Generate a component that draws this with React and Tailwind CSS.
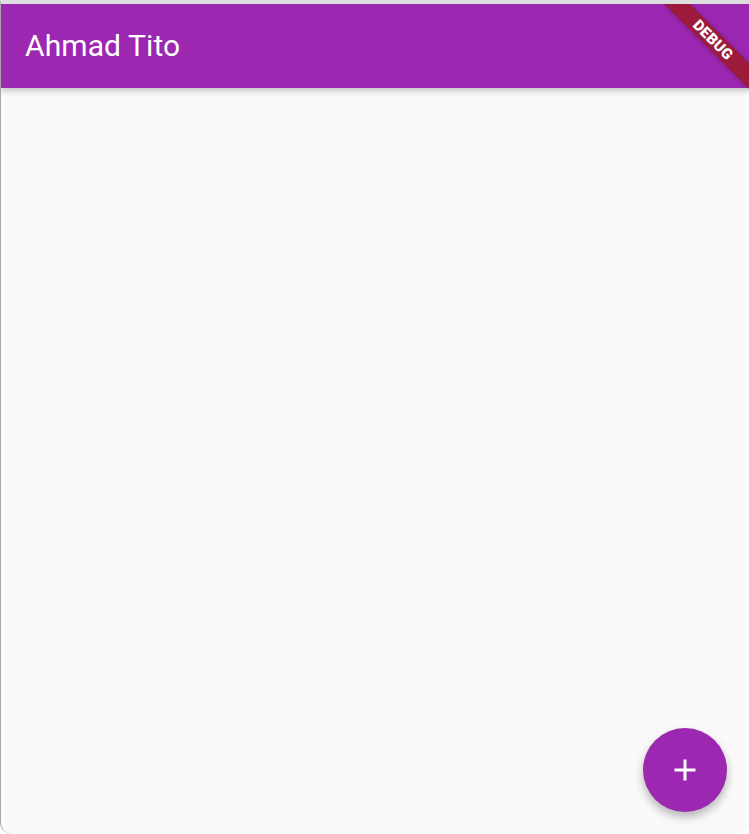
import React from 'react';

export default function App() {
    return (
        <div className="w-[749px] h-[834px] bg-white" style={{ fontFamily: 'Roboto, "Noto Sans", sans-serif' }}>
            <div className="relative h-full flex flex-col bg-[#fafafa] border-t-[4px] border-t-[#dedede] border-l border-l-[#a8a8a8] rounded-bl-[12px] rounded-br-[12px] overflow-hidden">
                {/* App bar */}
                <header className="h-[84px] shrink-0 bg-[#9c27b0] flex items-center px-[24px] shadow-[0_3px_6px_rgba(0,0,0,0.22)] z-10">
                    <h1 className="text-white text-[30px] font-normal leading-none tracking-[0.1px]">Ahmad Tito</h1>
                </header>

                <main className="flex-1"></main>

                {/* Debug banner */}
                <div className="absolute top-[27px] right-[-24px] w-[120px] h-[18px] rotate-45 bg-[#9c1a3a] flex items-center justify-center z-20 shadow-[0_0_5px_rgba(0,0,0,0.25)]">
                    <span className="text-white text-[15px] font-black leading-none tracking-[0.3px]">DEBUG</span>
                </div>

                {/* FAB */}
                <button className="absolute right-[22px] bottom-[22px] w-[84px] h-[84px] rounded-full bg-[#9c27b0] flex items-center justify-center shadow-[0_5px_10px_rgba(0,0,0,0.28)]">
                    <svg width="36" height="36" viewBox="0 0 24 24" fill="white">
                        <path d="M19 13h-6v6h-2v-6H5v-2h6V5h2v6h6v2z" />
                    </svg>
                </button>
            </div>
        </div>
    );
}
